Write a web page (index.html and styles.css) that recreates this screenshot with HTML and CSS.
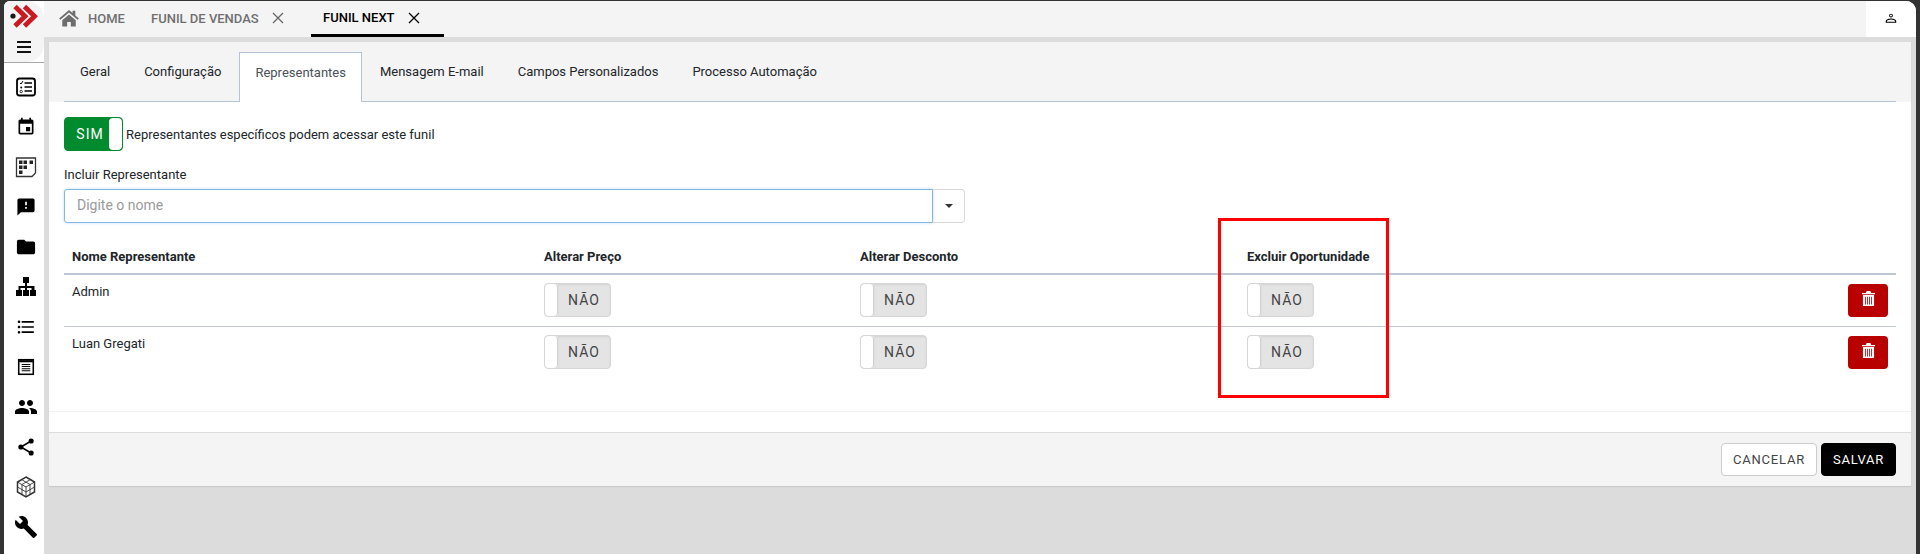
FILE: index.html
```html
<!DOCTYPE html>
<html lang="pt-BR">
<head>
<meta charset="utf-8">
<title>Funil Next</title>
<link rel="stylesheet" href="styles.css">
</head>
<body>
<div class="window">
  <aside class="sidebar">
    <div class="brand">
      <svg class="logo" viewBox="4 1 40 32" width="40" height="32"><circle cx="13" cy="16" r="2.600" fill="#1a1a1a"/><path d="M15 6.500L25 16.300 15 26M24.500 6.500L34.500 16.300 24.500 26" fill="none" stroke="#cb1a1f" stroke-width="4.800"/></svg>
      <div class="burger"><span></span><span></span><span></span></div>
    </div>
    <nav class="side-icons">
      <svg viewBox="0 0 24 24"><rect x="3" y="3.500" width="18" height="17" rx="2.500" fill="none" stroke="#000" stroke-width="1.800"/><path d="M10.500 8h7.500M10.500 12h7.500M10.500 16h7.500" stroke="#000" stroke-width="1.600"/><path d="M6 8l1 1 2-3" fill="none" stroke="#000" stroke-width="1"/><circle cx="7.200" cy="12.500" r="1"/><circle cx="7.200" cy="16.500" r="1.200" fill="none" stroke="#000" stroke-width=".8"/></svg>
      <svg viewBox="-2.400 -2.400 28.800 28.800"><path d="M17 12h-5v5h5v-5zM16 1v2H8V1H6v2H5c-1.110 0-1.990.9-1.990 2L3 19c0 1.100.89 2 2 2h14c1.100 0 2-.9 2-2V5c0-1.100-.9-2-2-2h-1V1h-2zm3 18H5V8h14v11z"/></svg>
      <svg viewBox="0 0 24 24"><path d="M2.500 3h19v15l-3.500 3.500H2.500z" fill="none" stroke="#333" stroke-width="1.300"/><path d="M5 5.500h3.500V9H5zM9.500 5.500H13V9H9.500zM5 10.500h3.500V14H5zM9.500 10.500H13V14H9.500zM5 15.500h3.500V19H5zM15.500 5.500h3.500V9h-3.500z" fill="#222"/></svg>
      <svg viewBox="-2 -2 28 28"><path d="M20 2H4c-1.100 0-1.990.9-1.990 2L2 22l4-4h14c1.100 0 2-.9 2-2V4c0-1.100-.9-2-2-2zm-7 12h-2v-2h2v2zm0-4h-2V6h2v4z"/></svg>
      <svg viewBox="-1.200 -1.200 26.400 26.400"><path d="M10 4H4c-1.100 0-1.990.9-1.990 2L2 18c0 1.100.9 2 2 2h16c1.100 0 2-.9 2-2V8c0-1.100-.9-2-2-2h-8l-2-2z"/></svg>
      <svg viewBox="0 0 24 24"><path d="M9 2h6v6h-2v3h7.500v4H22v6h-6v-6h1.500v-2h-4.500v2h2v6H9v-6h2v-2H6.500v2H8v6H2v-6h2.500v-4H11V8H9z"/></svg>
      <svg viewBox="-1.800 -1.800 27.600 27.600"><path d="M4 10.500c-.83 0-1.500.67-1.500 1.500s.67 1.500 1.500 1.500 1.500-.67 1.500-1.500-.67-1.500-1.500-1.500zm0-6c-.83 0-1.500.67-1.500 1.500S3.170 7.500 4 7.500 5.500 6.830 5.500 6 4.830 4.500 4 4.500zm0 12c-.83 0-1.500.68-1.500 1.500s.68 1.500 1.500 1.500 1.500-.68 1.500-1.500-.67-1.500-1.500-1.500zM7 19h14v-2H7v2zm0-6h14v-2H7v2zm0-8v2h14V5H7z"/></svg>
      <svg viewBox="-2 -2 28 28"><rect x="3.500" y="3.500" width="17" height="17" fill="none" stroke="#000" stroke-width="1.800"/><rect x="4" y="4" width="16" height="2.500"/><path d="M7 9h10M7 11.500h10M7 14h10M7 16.500h10" stroke="#000" stroke-width="1.200"/></svg>
      <svg viewBox="0 0 24 24"><path d="M16 11c1.660 0 2.990-1.340 2.990-3S17.660 5 16 5c-1.660 0-3 1.340-3 3s1.340 3 3 3zm-8 0c1.660 0 2.990-1.340 2.990-3S9.660 5 8 5C6.340 5 5 6.340 5 8s1.340 3 3 3zm0 2c-2.330 0-7 1.170-7 3.500V19h14v-2.500c0-2.330-4.670-3.500-7-3.500zm8 0c-.29 0-.62.02-.97.05 1.160.84 1.970 1.970 1.970 3.450V19h6v-2.500c0-2.330-4.670-3.500-7-3.500z"/></svg>
      <svg viewBox="-2 -2 28 28"><path d="M18 5L6 12l12 7" fill="none" stroke="#000" stroke-width="1.800"/><circle cx="18" cy="5" r="3"/><circle cx="6" cy="12" r="3"/><circle cx="18" cy="19" r="3"/></svg>
      <svg viewBox="0 0 24 24"><g fill="none" stroke="#333" stroke-width=".9"><path d="M12 2l8.500 5v10L12 22l-8.500-5V7z" stroke-width="1.500"/><path d="M3.500 7L12 12l8.500-5M12 12v10M7.500 4.500L16 9.500v10M16.500 4.500L8 9.500v10M3.500 12l8.500 5 8.500-5"/></g></svg>
      <svg viewBox="0 0 24 24"><path d="M22.700 19l-9.100-9.100c.9-2.300.4-5-1.500-6.900-2-2-5-2.400-7.400-1.300L9 6 6 9 1.600 4.700C.4 7.100.9 10.100 2.900 12.100c1.900 1.900 4.600 2.400 6.900 1.500l9.100 9.100c.4.4 1 .4 1.400 0l2.300-2.300c.5-.4.5-1.100.1-1.400z"/></svg>
    </nav>
  </aside>
  <div class="main">
    <header class="topbar">
      <div class="top-tab home-tab">
        <svg class="home-icon" viewBox="0 0 24 20" width="22" height="18"><path d="M12 1L1 10.500l1.500 1.500L12 4l9.500 8 1.500-1.500-4-3.400V2h-3v2.500z" fill="#6d6d6d"/><path d="M4.500 12.500L12 6l7.500 6.500V19.500h-5.500v-5h-4v5H4.500z" fill="#6d6d6d"/></svg>
        <span>HOME</span>
      </div>
      <div class="top-tab">
        <span>FUNIL DE VENDAS</span>
        <svg class="close" viewBox="0 0 12 12" width="12" height="12"><path d="M1 1l10 10M11 1L1 11" stroke="#666" stroke-width="1.300"/></svg>
      </div>
      <div class="top-tab active">
        <span>FUNIL NEXT</span>
        <svg class="close" viewBox="0 0 12 12" width="12" height="12"><path d="M1 1l10 10M11 1L1 11" stroke="#000" stroke-width="1.300"/></svg>
      </div>
      <div class="user">
        <svg viewBox="0 0 24 24" width="14" height="14"><path d="M12 4.500a3.300 3.300 0 1 0 0 6.600 3.300 3.300 0 0 0 0-6.600zm0 1.600a1.700 1.700 0 1 1 0 3.400 1.700 1.700 0 0 1 0-3.400zM12 13c-3.300 0-9 1.400-9 4.500V20h18v-2.500c0-3.100-5.700-4.500-9-4.500zm-7 5.300v-.8c0-1.100 3.900-2.800 7-2.800s7 1.700 7 2.800v.8z"/></svg>
      </div>
    </header>
    <section class="panel">
      <nav class="subtabs">
        <a class="subtab">Geral</a>
        <a class="subtab">Configuração</a>
        <a class="subtab current">Representantes</a>
        <a class="subtab">Mensagem E-mail</a>
        <a class="subtab">Campos Personalizados</a>
        <a class="subtab">Processo Automação</a>
      </nav>
      <div class="content">
        <div class="access">
          <div class="switch on"><span class="switch-label">SIM</span><span class="knob"></span></div>
          <span class="access-text">Representantes específicos podem acessar este funil</span>
        </div>
        <label class="field-label">Incluir Representante</label>
        <div class="combo">
          <div class="combo-input">Digite o nome</div>
          <div class="combo-btn"><span class="caret"></span></div>
        </div>
        <div class="table">
          <div class="row head">
            <div>Nome Representante</div><div>Alterar Preço</div><div>Alterar Desconto</div><div>Excluir Oportunidade</div><div></div>
          </div>
          <div class="row">
            <div>Admin</div>
            <div><div class="switch off"><span class="knob"></span><span class="switch-label">NÃO</span></div></div>
            <div><div class="switch off"><span class="knob"></span><span class="switch-label">NÃO</span></div></div>
            <div><div class="switch off"><span class="knob"></span><span class="switch-label">NÃO</span></div></div>
            <div class="action"><button class="trash"><svg viewBox="0 0 14 16" width="13" height="15"><path d="M5 0h4l1 2h4v1.300H0V2h4zM1 4.300h12V16H1zM3.200 6v8.500h.9V6zm2.300 0v8.500h.9V6zm2.200 0v8.500h.9V6zm2.200 0v8.500h.9V6z" fill="#fff"/></svg></button></div>
          </div>
          <div class="row last">
            <div>Luan Gregati</div>
            <div><div class="switch off"><span class="knob"></span><span class="switch-label">NÃO</span></div></div>
            <div><div class="switch off"><span class="knob"></span><span class="switch-label">NÃO</span></div></div>
            <div><div class="switch off"><span class="knob"></span><span class="switch-label">NÃO</span></div></div>
            <div class="action"><button class="trash"><svg viewBox="0 0 14 16" width="13" height="15"><path d="M5 0h4l1 2h4v1.300H0V2h4zM1 4.300h12V16H1zM3.200 6v8.500h.9V6zm2.300 0v8.500h.9V6zm2.200 0v8.500h.9V6zm2.200 0v8.500h.9V6z" fill="#fff"/></svg></button></div>
          </div>
        </div>
      </div>
      <footer class="footer">
        <button class="btn cancel">CANCELAR</button>
        <button class="btn save">SALVAR</button>
      </footer>
    </section>
  </div>
  <div class="highlight"></div>
</div>
</body>
</html>
```
FILE: styles.css
```css
* { box-sizing: border-box; }
html, body { margin: 0; height: 100%; overflow: hidden; }
body {
  background: #333;
  padding: 1px 4px 0;
  font-family: Roboto, "Liberation Sans", sans-serif;
  font-size: 13px;
  color: #212529;
}
.window {
  position: relative;
  display: flex;
  height: 553px;
  background: #dcdcdc;
  border-radius: 6px 10px 0 0;
  overflow: hidden;
}
.sidebar { width: 40px; flex: none; background: #fff; border-right: 0; }
.brand {
  height: 62px;
  background: linear-gradient(#f4f4f4, #f4f4f4);
  border-bottom: 1px solid #a8a8a8;
  border-radius: 0 18px 0 0;
  display: flex;
  flex-direction: column;
  align-items: center;
  position: relative;
}
.brand::after {
  content: "";
  position: absolute;
  right: 0;
  bottom: 0;
  width: 16px;
  height: 16px;
  background: radial-gradient(circle at 0 0, transparent 15px, #fff 16px);
}
.logo { display: block; }
.burger { margin-top: 8px; display: flex; flex-direction: column; gap: 3px; }
.burger span { display: block; width: 14px; height: 2px; background: #111; }
.side-icons { display: flex; flex-direction: column; align-items: center; padding-top: 12px; gap: 16px; }
.side-icons svg { width: 24px; height: 24px; display: block; margin-left: 4px; }
.main { flex: 1; min-width: 0; display: flex; flex-direction: column; }
.topbar {
  height: 36px;
  background: #f4f4f4;
  display: flex;
  align-items: stretch;
  font-weight: 500;
}
.top-tab {
  display: flex;
  align-items: center;
  padding: 0 0 2px;
  color: #6f6f6f;
  font-size: 13px;
}
.home-tab { padding-left: 14px; width: 107px; }
.home-icon { margin-right: 8px; }
.top-tab .close { margin-left: 13px; }
.top-tab:nth-child(2) { width: 160px; }
.top-tab.active { color: #000; width: 133px; padding-left: 12px; border-bottom: 3px solid #000; padding-bottom: 0; }
.user { margin-left: auto; width: 50px; background: #fff; display: flex; align-items: center; justify-content: center; padding-bottom: 2px; }
.panel {
  margin: 5px 5px 0 5px;
  height: 444px;
  background: #fff;
  box-shadow: 0 1px 1px rgba(0,0,0,.08);
  display: flex;
  flex-direction: column;
}
.subtabs {
  height: 60px;
  background: #f4f4f4;
  padding: 10px 15px 0;
  display: flex;
  align-items: stretch;
  gap: 2px;
  position: relative;
}
.subtabs::after {
  content: "";
  position: absolute;
  left: 15px; right: 15px; bottom: 0;
  height: 1px;
  background: #b5c4d4;
}
.subtab {
  padding: 0 16px 11px;
  display: flex;
  align-items: center;
  color: #212529;
  height: 50px;
}
.subtab.current {
  position: relative;
  z-index: 1;
  background: #fff;
  color: #495057;
  border: 1px solid #b5c4d4;
  border-bottom: 0;
  padding: 0 15px 10px;
}
.content { flex: 1; padding: 15px 15px 0; border-bottom: 1px solid #f1f1f1; margin-bottom: 20px; }
.access { display: flex; align-items: center; gap: 3px; }
.switch {
  display: flex;
  height: 34px;
  border-radius: 4px;
  overflow: hidden;
  font-size: 14px;
  letter-spacing: .5px;
}
.switch.on { width: 59px; background: #028a2f; border: 1px solid #028a2f; color: #fff; }
.switch.on .switch-label { width: 44px; padding-left: 6px; text-align: center; line-height: 32px; letter-spacing: 1px; }
.switch.on .knob { width: 13px; background: #fff; border-radius: 4px; }
.switch.off { width: 67px; background: #e4e4e4; border: 1px solid #d6d6d6; color: #444; }
.switch.off .knob { width: 13px; background: #fff; border-right: 1px solid #d0d0d0; border-radius: 4px; }
.switch.off .switch-label { flex: 1; text-align: center; line-height: 32px; letter-spacing: 1px; box-shadow: inset 0 1px 2px rgba(0,0,0,.08); }
.field-label { display: block; margin-top: 14px; line-height: 20px; height: 24px; }
.combo { display: flex; width: 901px; height: 34px; }
.combo-input {
  flex: 1;
  border: 1px solid #80b8e6;
  box-shadow: 0 0 3px rgba(128,184,230,.5);
  border-radius: 3px 0 0 3px;
  padding: 0 12px;
  line-height: 30px;
  font-size: 14px;
  color: #9a9a9a;
}
.combo-btn {
  width: 32px;
  border: 1px solid #d8d8d8;
  border-left: 0;
  border-radius: 0 4px 4px 0;
  display: flex;
  align-items: center;
  justify-content: center;
}
.caret { width: 0; height: 0; border: 4px solid transparent; border-top-color: #333; border-bottom: 0; }
.table { margin-top: 15px; }
.row {
  display: grid;
  grid-template-columns: 472px 316px 387px 1fr 48px;
  padding: 8px;
  height: 52px;
  border-bottom: 1px solid #c3ccd6;
  line-height: 20px;
}
.row > div:first-child { line-height: 18px; }
.row.head > div:first-child { line-height: 20px; }
.row.head { height: 37px; padding-top: 9px; font-weight: 700; font-size: 13px; border-bottom: 2px solid #bcc8d4; }
.row.last { border-bottom: 0; }
.action { display: flex; justify-content: flex-end; }
.trash {
  width: 40px;
  height: 33px;
  background: #b90000;
  border: 0;
  border-radius: 4px;
  padding: 0 0 4px;
  display: flex;
  align-items: center;
  justify-content: center;
  margin-top: 1px;
}
.footer {
  height: 54px;
  flex: none;
  background: #f4f4f4;
  border-top: 1px solid #dcdcdc;
  padding: 10px 15px 0;
  display: flex;
  justify-content: flex-end;
  gap: 4px;
}
.btn {
  height: 33px;
  border-radius: 4px;
  font-family: inherit;
  font-size: 13px;
  letter-spacing: .8px;
  padding: 0;
}
.cancel { width: 96px; background: #fff; border: 1px solid #ccc; color: #444; }
.save { width: 75px; background: #000; border: 1px solid #000; color: #fff; }
.highlight {
  position: absolute;
  left: 1214px;
  top: 217px;
  width: 171px;
  height: 180px;
  border: 3px solid #f00;
  pointer-events: none;
}
```
